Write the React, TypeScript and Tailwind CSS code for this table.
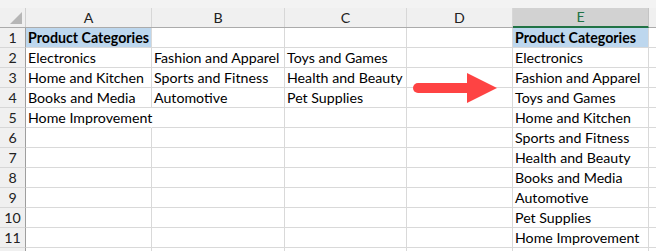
const COLS = [
  { key: 'A', w: 126 },
  { key: 'B', w: 133 },
  { key: 'C', w: 122 },
  { key: 'D', w: 106 },
  { key: 'E', w: 136 },
  { key: 'F', w: 80 },
];

const source: Record<string, string>[] = [
  { A: 'Product Categories' },
  { A: 'Electronics', B: 'Fashion and Apparel', C: 'Toys and Games' },
  { A: 'Home and Kitchen', B: 'Sports and Fitness', C: 'Health and Beauty' },
  { A: 'Books and Media', B: 'Automotive', C: 'Pet Supplies' },
  { A: 'Home Improvement' },
];

const stacked = [
  'Product Categories',
  'Electronics',
  'Fashion and Apparel',
  'Toys and Games',
  'Home and Kitchen',
  'Sports and Fitness',
  'Health and Beauty',
  'Books and Media',
  'Automotive',
  'Pet Supplies',
  'Home Improvement',
];

function cellValue(row: number, col: string) {
  if (col === 'E') return stacked[row] ?? '';
  return source[row]?.[col] ?? '';
}

export default function App() {
  const rows = Array.from({ length: 12 }, (_, i) => i);
  return (
    <div className="relative w-[656px] h-[251px] overflow-hidden bg-white font-['Lato',sans-serif] text-[14.2px] text-black">
      <div className="h-[8px] bg-[#f3f3f3]" />
      {/* column letters; F sits mostly past the right edge so its letter isn't visible */}
      <div className="flex h-[20px] bg-[#f0f0f0] border-b border-[#ababab]">
        <div className="w-[26px] shrink-0 border-r border-[#d0d0d0] relative">
          <div className="absolute right-[3px] bottom-[3px] w-0 h-0 border-l-[12px] border-l-transparent border-b-[12px] border-b-[#b6b6b6]" />
        </div>
        {COLS.map((c) =>
          c.key === 'E' ? (
            <div
              key={c.key}
              style={{ width: c.w }}
              className="shrink-0 flex items-center justify-center bg-[#d2d2d2] border-r border-[#c4c4c4] text-[#217346] border-b-2 border-b-[#217346] -mb-px"
            >
              {c.key}
            </div>
          ) : (
            <div
              key={c.key}
              style={{ width: c.w }}
              className="shrink-0 flex items-center justify-center border-r border-[#d7d7d7] text-[#222]"
            >
              {c.key === 'F' ? '' : c.key}
            </div>
          )
        )}
      </div>
      {rows.map((r) => (
        <div key={r} className="flex h-[20px]">
          <div className="w-[26px] shrink-0 bg-[#f0f0f0] border-r border-[#9e9e9e] border-b border-b-[#d7d7d7] flex items-center justify-center text-[#222]">
            {r < 11 ? r + 1 : ''}
          </div>
          {COLS.map((c) => {
            const v = cellValue(r, c.key);
            const header = r === 0 && (c.key === 'A' || c.key === 'E');
            const spills = r === 4 && c.key === 'A';
            return (
              <div
                key={c.key}
                style={{ width: c.w }}
                className={`shrink-0 border-b border-[#d9d9d9] flex items-center pl-[2px] whitespace-nowrap overflow-visible relative z-10 ${
                  spills ? 'border-r border-r-transparent' : 'border-r border-r-[#d9d9d9]'
                } ${header ? 'bg-[#bdd7ee] font-bold' : ''}`}
              >
                {v}
              </div>
            );
          })}
        </div>
      ))}
      <svg className="absolute left-0 top-0 z-20" width="656" height="251">
        <line x1="418" y1="88" x2="470" y2="88" stroke="#fe4343" strokeWidth="10" strokeLinecap="round" />
        <polygon points="467,73 497,88 467,103" fill="#fe4343" />
      </svg>
    </div>
  );
}
